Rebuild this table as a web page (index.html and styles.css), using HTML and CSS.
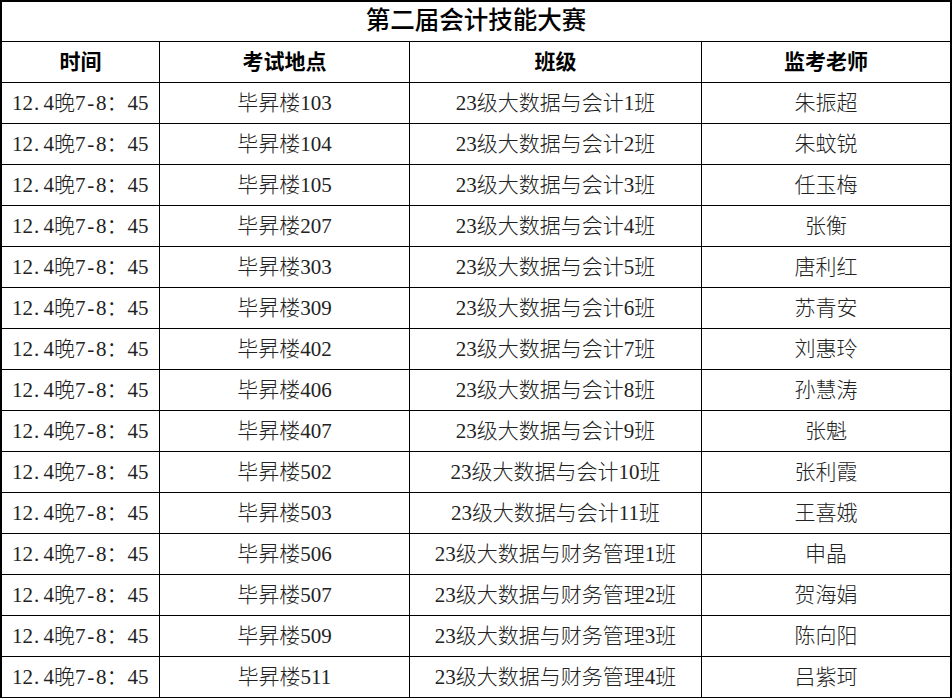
FILE: index.html
```html
<!DOCTYPE html>
<html lang="zh-CN">
<head>
<meta charset="utf-8">
<title>第二届会计技能大赛</title>
<link rel="stylesheet" href="styles.css">
</head>
<body>
<div class="sheet">
  <div class="cell title">第二届会计技能大赛</div>
  <div class="cell head">时间</div>
  <div class="cell head">考试地点</div>
  <div class="cell head">班级</div>
  <div class="cell head">监考老师</div>

  <div class="cell time"><span class="t">12<span class="dot">.</span>4晚7<span class="dash">-</span>8：45</span></div>
  <div class="cell">毕昇楼103</div><div class="cell">23级大数据与会计1班</div><div class="cell">朱振超</div>

  <div class="cell time"><span class="t">12<span class="dot">.</span>4晚7<span class="dash">-</span>8：45</span></div>
  <div class="cell">毕昇楼104</div><div class="cell">23级大数据与会计2班</div><div class="cell">朱蚊锐</div>

  <div class="cell time"><span class="t">12<span class="dot">.</span>4晚7<span class="dash">-</span>8：45</span></div>
  <div class="cell">毕昇楼105</div><div class="cell">23级大数据与会计3班</div><div class="cell">任玉梅</div>

  <div class="cell time"><span class="t">12<span class="dot">.</span>4晚7<span class="dash">-</span>8：45</span></div>
  <div class="cell">毕昇楼207</div><div class="cell">23级大数据与会计4班</div><div class="cell">张衡</div>

  <div class="cell time"><span class="t">12<span class="dot">.</span>4晚7<span class="dash">-</span>8：45</span></div>
  <div class="cell">毕昇楼303</div><div class="cell">23级大数据与会计5班</div><div class="cell">唐利红</div>

  <div class="cell time"><span class="t">12<span class="dot">.</span>4晚7<span class="dash">-</span>8：45</span></div>
  <div class="cell">毕昇楼309</div><div class="cell">23级大数据与会计6班</div><div class="cell">苏青安</div>

  <div class="cell time"><span class="t">12<span class="dot">.</span>4晚7<span class="dash">-</span>8：45</span></div>
  <div class="cell">毕昇楼402</div><div class="cell">23级大数据与会计7班</div><div class="cell">刘惠玲</div>

  <div class="cell time"><span class="t">12<span class="dot">.</span>4晚7<span class="dash">-</span>8：45</span></div>
  <div class="cell">毕昇楼406</div><div class="cell">23级大数据与会计8班</div><div class="cell">孙慧涛</div>

  <div class="cell time"><span class="t">12<span class="dot">.</span>4晚7<span class="dash">-</span>8：45</span></div>
  <div class="cell">毕昇楼407</div><div class="cell">23级大数据与会计9班</div><div class="cell">张魁</div>

  <div class="cell time"><span class="t">12<span class="dot">.</span>4晚7<span class="dash">-</span>8：45</span></div>
  <div class="cell">毕昇楼502</div><div class="cell">23级大数据与会计10班</div><div class="cell">张利霞</div>

  <div class="cell time"><span class="t">12<span class="dot">.</span>4晚7<span class="dash">-</span>8：45</span></div>
  <div class="cell">毕昇楼503</div><div class="cell">23级大数据与会计11班</div><div class="cell">王喜娥</div>

  <div class="cell time"><span class="t">12<span class="dot">.</span>4晚7<span class="dash">-</span>8：45</span></div>
  <div class="cell">毕昇楼506</div><div class="cell">23级大数据与财务管理1班</div><div class="cell">申晶</div>

  <div class="cell time"><span class="t">12<span class="dot">.</span>4晚7<span class="dash">-</span>8：45</span></div>
  <div class="cell">毕昇楼507</div><div class="cell">23级大数据与财务管理2班</div><div class="cell">贺海娟</div>

  <div class="cell time"><span class="t">12<span class="dot">.</span>4晚7<span class="dash">-</span>8：45</span></div>
  <div class="cell">毕昇楼509</div><div class="cell">23级大数据与财务管理3班</div><div class="cell">陈向阳</div>

  <div class="cell time"><span class="t">12<span class="dot">.</span>4晚7<span class="dash">-</span>8：45</span></div>
  <div class="cell">毕昇楼511</div><div class="cell">23级大数据与财务管理4班</div><div class="cell">吕紫珂</div>
</div>
</body>
</html>
```

FILE: styles.css
```css
html, body {
  margin: 0;
  padding: 0;
  background: #fff;
}

.sheet {
  display: grid;
  grid-template-columns: 157px 249px 291px 248px;
  grid-template-rows: 39px repeat(16, 40px);
  gap: 1px;
  width: 952px;
  box-sizing: border-box;
  padding: 2px 2px 1px 2px;
  background: #000;
  font-family: "Liberation Serif", "Noto Sans CJK SC", serif;
  font-size: 21px;
  font-weight: 300;
  color: #222;
}

.cell {
  background: #fff;
  display: flex;
  align-items: center;
  justify-content: center;
  white-space: nowrap;
  line-height: 1;
}

.title {
  grid-column: 1 / -1;
  font-size: 24.5px;
  font-weight: 500;
  color: #000;
}

.head {
  font-weight: 700;
  color: #000;
}

.time {
  justify-content: flex-start;
  padding-left: 10px;
}

.time .t {
  font-size: 21px;
}

.dot,
.dash {
  display: inline-block;
  width: 0.5em;
}

.dot {
  text-align: left;
  padding-left: 1px;
  box-sizing: border-box;
}

.dash {
  text-align: center;
}
```
